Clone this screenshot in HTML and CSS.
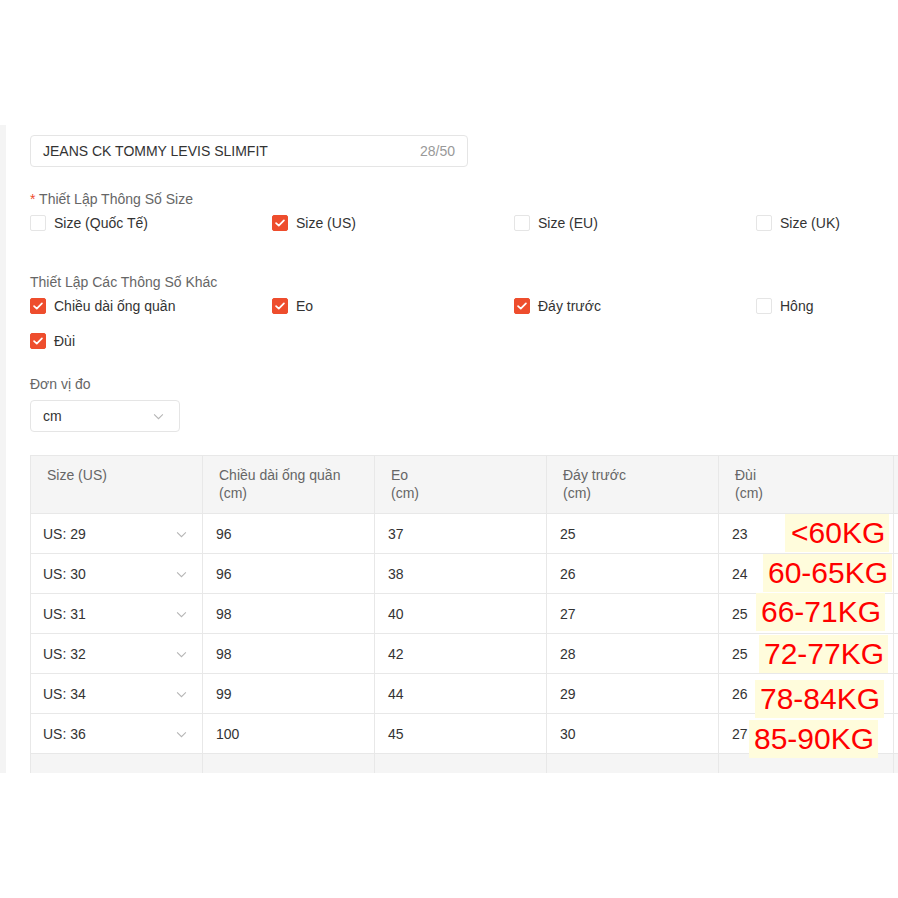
FILE: index.html
```html
<!DOCTYPE html>
<html lang="vi">
<head>
<meta charset="utf-8">
<title>Size chart</title>
<link rel="stylesheet" href="styles.css">
</head>
<body>
<div class="top-space"></div>
<div class="page">
  <div class="strip"></div>
  <div class="content">
    <div class="text-input">
      <span class="ti-value">JEANS CK TOMMY LEVIS SLIMFIT</span>
      <span class="ti-count">28/50</span>
    </div>

    <div class="label label-first"><span class="req">*</span> Thiết Lập Thông Số Size</div>
    <div class="check-grid">
      <label class="check"><span class="box"></span>Size (Quốc Tế)</label>
      <label class="check"><span class="box on"><svg viewBox="0 0 16 16"><polyline points="3.5,8.2 6.6,11 12.5,5"/></svg></span>Size (US)</label>
      <label class="check"><span class="box"></span>Size (EU)</label>
      <label class="check"><span class="box"></span>Size (UK)</label>
    </div>

    <div class="label label-second">Thiết Lập Các Thông Số Khác</div>
    <div class="check-grid">
      <label class="check"><span class="box on"><svg viewBox="0 0 16 16"><polyline points="3.5,8.2 6.6,11 12.5,5"/></svg></span>Chiều dài ống quần</label>
      <label class="check"><span class="box on"><svg viewBox="0 0 16 16"><polyline points="3.5,8.2 6.6,11 12.5,5"/></svg></span>Eo</label>
      <label class="check"><span class="box on"><svg viewBox="0 0 16 16"><polyline points="3.5,8.2 6.6,11 12.5,5"/></svg></span>Đáy trước</label>
      <label class="check"><span class="box"></span>Hông</label>
    </div>
    <div class="check-grid row-two">
      <label class="check"><span class="box on"><svg viewBox="0 0 16 16"><polyline points="3.5,8.2 6.6,11 12.5,5"/></svg></span>Đùi</label>
    </div>

    <div class="label label-unit">Đơn vị đo</div>
    <div class="select">
      <span>cm</span>
      <svg class="chev" viewBox="0 0 12 8"><polyline points="1,1.5 6,6.5 11,1.5"/></svg>
    </div>

    <div class="table-wrap">
      <table class="size-table">
        <colgroup>
          <col class="c1"><col class="c2"><col class="c3"><col class="c4"><col class="c5"><col class="c6">
        </colgroup>
        <thead>
          <tr>
            <th>Size (US)</th>
            <th>Chiều dài ống quần<br>(cm)</th>
            <th>Eo<br>(cm)</th>
            <th>Đáy trước<br>(cm)</th>
            <th>Đùi<br>(cm)</th>
            <th></th>
          </tr>
        </thead>
        <tbody>
          <tr><td class="sel">US: 29<svg class="chev" viewBox="0 0 12 8"><polyline points="1,1.5 6,6.5 11,1.5"/></svg></td><td>96</td><td>37</td><td>25</td><td>23</td><td></td></tr>
          <tr><td class="sel">US: 30<svg class="chev" viewBox="0 0 12 8"><polyline points="1,1.5 6,6.5 11,1.5"/></svg></td><td>96</td><td>38</td><td>26</td><td>24</td><td></td></tr>
          <tr><td class="sel">US: 31<svg class="chev" viewBox="0 0 12 8"><polyline points="1,1.5 6,6.5 11,1.5"/></svg></td><td>98</td><td>40</td><td>27</td><td>25</td><td></td></tr>
          <tr><td class="sel">US: 32<svg class="chev" viewBox="0 0 12 8"><polyline points="1,1.5 6,6.5 11,1.5"/></svg></td><td>98</td><td>42</td><td>28</td><td>25</td><td></td></tr>
          <tr><td class="sel">US: 34<svg class="chev" viewBox="0 0 12 8"><polyline points="1,1.5 6,6.5 11,1.5"/></svg></td><td>99</td><td>44</td><td>29</td><td>26</td><td></td></tr>
          <tr><td class="sel">US: 36<svg class="chev" viewBox="0 0 12 8"><polyline points="1,1.5 6,6.5 11,1.5"/></svg></td><td>100</td><td>45</td><td>30</td><td>27</td><td></td></tr>
          <tr class="foot"><td></td><td></td><td></td><td></td><td></td><td></td></tr>
        </tbody>
      </table>
      <span class="kg kg1">&lt;60KG</span>
      <span class="kg kg2">60-65KG</span>
      <span class="kg kg3">66-71KG</span>
      <span class="kg kg4">72-77KG</span>
      <span class="kg kg5">78-84KG</span>
      <span class="kg kg6">85-90KG</span>
    </div>
  </div>
</div>
</body>
</html>
```

FILE: styles.css
```css
* { box-sizing: border-box; }
html, body {
  margin: 0;
  padding: 0;
  background: #fff;
  font-family: "Liberation Sans", Arial, sans-serif;
  font-size: 14px;
  color: #333;
}
.top-space { height: 125px; }
.page {
  display: flex;
  height: 648px;
  overflow: hidden;
  width: 898px;
}
.strip {
  width: 6px;
  flex: none;
  background: #f4f4f4;
}
.content {
  flex: 1;
  padding: 10px 0 0 24px;
  min-width: 0;
  overflow: hidden;
}
.text-input {
  width: 438px;
  height: 32px;
  border: 1px solid #e5e5e5;
  border-radius: 4px;
  display: flex;
  align-items: center;
  justify-content: space-between;
  padding: 0 12px 0 12px;
  line-height: 20px;
}
.ti-value { color: #333; }
.ti-count { color: #999; }
.label {
  color: #666;
  line-height: 20px;
}
.req { color: #ee4d2d; }
.label-first { margin-top: 22px; }
.label-second { margin-top: 39px; }
.label-unit { margin-top: 23px; }
.check-grid {
  display: grid;
  grid-template-columns: repeat(4, 242px);
  margin-top: 4px;
}
.check-grid.row-two { margin-top: 15px; }
.check {
  display: flex;
  align-items: center;
  gap: 8px;
  line-height: 20px;
  color: #333;
}
.box {
  width: 16px;
  height: 16px;
  border: 1px solid #e5e5e5;
  border-radius: 2px;
  flex: none;
  display: flex;
}
.box.on {
  background: #ee4d2d;
  border-color: #ee4d2d;
}
.box svg {
  width: 14px;
  height: 14px;
}
.box polyline {
  fill: none;
  stroke: #fff;
  stroke-width: 2;
  stroke-linecap: round;
  stroke-linejoin: round;
}
.select {
  margin-top: 6px;
  width: 150px;
  height: 32px;
  border: 1px solid #e5e5e5;
  border-radius: 4px;
  display: flex;
  align-items: center;
  justify-content: space-between;
  padding: 0 15px 0 12px;
}
.chev {
  width: 11px;
  height: 7px;
  flex: none;
}
.chev polyline {
  fill: none;
  stroke: #b5b5b5;
  stroke-width: 1.2;
}
.table-wrap {
  position: relative;
  margin-top: 23px;
  width: 1000px;
}
.size-table {
  border-collapse: collapse;
  table-layout: fixed;
  width: 963px;
}
.c1, .c2, .c3, .c4 { width: 172px; }
.c5 { width: 175px; }
.c6 { width: 100px; }
.size-table th {
  background: #f5f5f5;
  color: #666;
  font-weight: normal;
  text-align: left;
  vertical-align: top;
  line-height: 18px;
  padding: 10px 16px 11px 16px;
  height: 58px;
  border: 1px solid #e8e8e8;
}
.size-table td {
  height: 40px;
  padding: 0 13px;
  line-height: 20px;
  border: 1px solid #e8e8e8;
  color: #333;
}
.size-table td.sel {
  padding: 0 15px 0 12px;
}
.size-table td.sel {
  position: relative;
}
.size-table td.sel .chev {
  position: absolute;
  right: 15px;
  top: 17px;
}
.size-table tr.foot td {
  background: #f5f5f5;
  height: 40px;
}
.kg {
  position: absolute;
  background: #fffcdc;
  color: #ff0000;
  font-family: "Liberation Sans", Arial, sans-serif;
  font-size: 30px;
  line-height: 38px;
  padding: 0 4px 0 5px;
  white-space: nowrap;
}
.kg1 { left: 755px; top: 59px; padding-left: 6px; }
.kg2 { left: 733px; top: 99px; }
.kg3 { left: 726px; top: 138px; }
.kg4 { left: 729px; top: 180px; }
.kg5 { left: 725px; top: 225px; }
.kg6 { left: 719px; top: 265px; }
```
